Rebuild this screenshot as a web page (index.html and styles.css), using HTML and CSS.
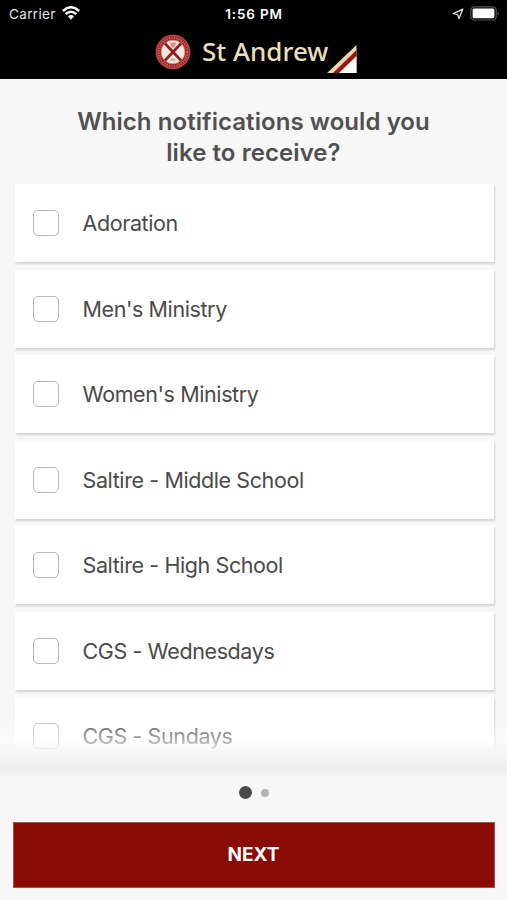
FILE: index.html
```html
<!DOCTYPE html>
<html lang="en">
<head>
<meta charset="utf-8">
<title>St Andrew</title>
<link rel="stylesheet" href="styles.css">
</head>
<body>
<div class="app">
  <header class="header">
    <div class="status">
      <div class="status-left"><span class="carrier">Carrier</span>
        <svg class="wifi" width="18" height="14" viewBox="0 0 18 14"><g fill="none" stroke="#fff" stroke-width="2.5"><path d="M.9 5Q9-2.4 17.1 5"/><path d="M3.7 8.1Q9 3.4 14.3 8.1"/></g><path d="M5.9 10.3Q9 7.7 12.1 10.3L9 13.7Z" fill="#fff"/></svg>
      </div>
      <span class="time">1:56 PM</span>
      <div class="status-right">
        <svg width="12" height="12" viewBox="0 0 12 12"><path d="M10.7 1.2 1.2 5.7 5.5 6.3 7 10.6Z" fill="none" stroke="#ddd" stroke-width="1.3" stroke-linejoin="round"/></svg>
        <svg width="30" height="15" viewBox="0 0 30 15"><rect x=".8" y=".8" width="25.4" height="13.2" rx="3.6" fill="none" stroke="#555" stroke-width="1.2"/><rect x="2.6" y="2.6" width="21.8" height="9.6" rx="1.5" fill="#fff"/><path d="M27.6 5.2Q30 7.4 27.6 9.6Z" fill="#555"/></svg>
      </div>
    </div>
    <div class="brand">
      <svg class="seal" width="36" height="36" viewBox="0 0 36 36"><circle cx="18" cy="18" r="17.5" fill="#a32a2b"/><circle cx="18" cy="18" r="16.5" fill="none" stroke="#bd5a57" stroke-width=".8"/><circle cx="18" cy="18" r="14.2" fill="none" stroke="#c56c67" stroke-width="2" stroke-dasharray="1 1.5"/><circle cx="18" cy="18" r="11.8" fill="#f1e8dc" stroke="#d88c85" stroke-width=".8"/><path d="M10 9.5 26 26.5M26 9.5 10 26.5" stroke="#8d2021" stroke-width="2.8"/><path d="M15.3 8.5H20.7V11Q20.5 12.8 18 14Q15.5 12.8 15.3 11Z" fill="#d2968c"/><path d="M15 26.5 16.5 24.4H19.5L21 26.5Z" fill="#b6aaa0"/></svg>
      <span class="name">St Andrew</span>
      <svg class="flag" width="30" height="28" viewBox="0 0 30 28"><path d="M29.5 0V28H0Z" fill="#ead6ac"/><path d="M29.5 5V28H6Z" fill="#9b1512"/><path d="M29.5 11V28H12Z" fill="#fff"/></svg>
    </div>
  </header>
  <main class="main">
    <h1 class="title">Which notifications would you<br>like to receive?</h1>
    <div class="list">
      <label class="card"><span class="box"></span><span class="text">Adoration</span></label>
      <label class="card"><span class="box"></span><span class="text">Men's Ministry</span></label>
      <label class="card"><span class="box"></span><span class="text">Women's Ministry</span></label>
      <label class="card"><span class="box"></span><span class="text">Saltire - Middle School</span></label>
      <label class="card"><span class="box"></span><span class="text">Saltire - High School</span></label>
      <label class="card"><span class="box"></span><span class="text">CGS - Wednesdays</span></label>
      <label class="card"><span class="box"></span><span class="text">CGS - Sundays</span></label>
      <div class="fade"></div>
    </div>
  </main>
  <footer class="footer">
    <div class="dots"><span class="dot on"></span><span class="dot"></span></div>
    <button class="next">NEXT</button>
  </footer>
</div>
</body>
</html>
```

FILE: styles.css
```css
* { box-sizing: border-box; }
body { margin: 0; font-family: Inter, "Liberation Sans", sans-serif; color: #4a4a4a; background: #f7f7f7; }
.app { height: 900px; display: flex; flex-direction: column; overflow: hidden; background: #f7f7f7; }
.header { height: 79px; flex: none; background: #000; color: #fff; }
.status { height: 27px; display: grid; grid-template-columns: 1fr auto 1fr; align-items: center; padding: 0 7px 0 9px; font-size: 13.5px; }
.status-left, .status-right { display: flex; align-items: center; gap: 6px; }
.status-right { justify-content: flex-end; }
.carrier { letter-spacing: .35px; color: #e4e4e4; }
.wifi { margin-top: -2px; }
.time { font-weight: 600; letter-spacing: .85px; margin-right: 1px; }
.brand { display: flex; height: 46px; padding: 7px 0 0 155px; align-items: flex-start; }
.name { width: 125px; margin: -1px 0 0 11px; font: 500 26px/36px "Noto Sans", sans-serif; color: #e9dfba; white-space: nowrap; }
.flag { margin-top: 11px; }
.main { height: 700px; flex: none; display: flex; flex-direction: column; }
.title { margin: 0; padding-top: 27px; height: 105px; flex: none; font-size: 24px; line-height: 31px; letter-spacing: .07px; font-weight: 600; color: #505050; text-align: center; }
.list { position: relative; height: 595px; overflow: hidden; padding: 0 13.5px 0 14.5px; display: flex; flex-direction: column; gap: 7.5px; }
.card { height: 78px; flex: none; display: flex; align-items: center; padding-left: 18px; gap: 24px; background: #fff; box-shadow: 1px 1.5px 2px rgba(0,0,0,.15); }
.box { width: 26px; height: 26px; border: 1.5px solid #b8b8b8; border-radius: 5px; }
.text { font-size: 21.5px; line-height: 28px; letter-spacing: -.4px; }
.fade { position: absolute; left: 0; right: 0; top: 531px; height: 64px; background: linear-gradient(rgba(255,255,255,0), rgba(255,255,255,.5) 24px, #f6f6f6 40px, #eee 48px, #eee 53px, #f7f7f7 64px); }
.footer { flex: 1; display: flex; flex-direction: column; }
.dots { height: 43px; display: flex; align-items: center; justify-content: center; gap: 9px; padding: 0 0 16px 1px; }
.dot { width: 8px; height: 8px; border-radius: 50%; background: #b3b3b3; }
.dot.on { width: 13px; height: 13px; background: #4a4a4a; }
.next { height: 66px; margin: 0 12px 0 13px; padding: 0 1px 1px 0; border: 1px solid #a94e49; background: #890b04; color: #fff; font: 700 19px Inter, sans-serif; }
```
